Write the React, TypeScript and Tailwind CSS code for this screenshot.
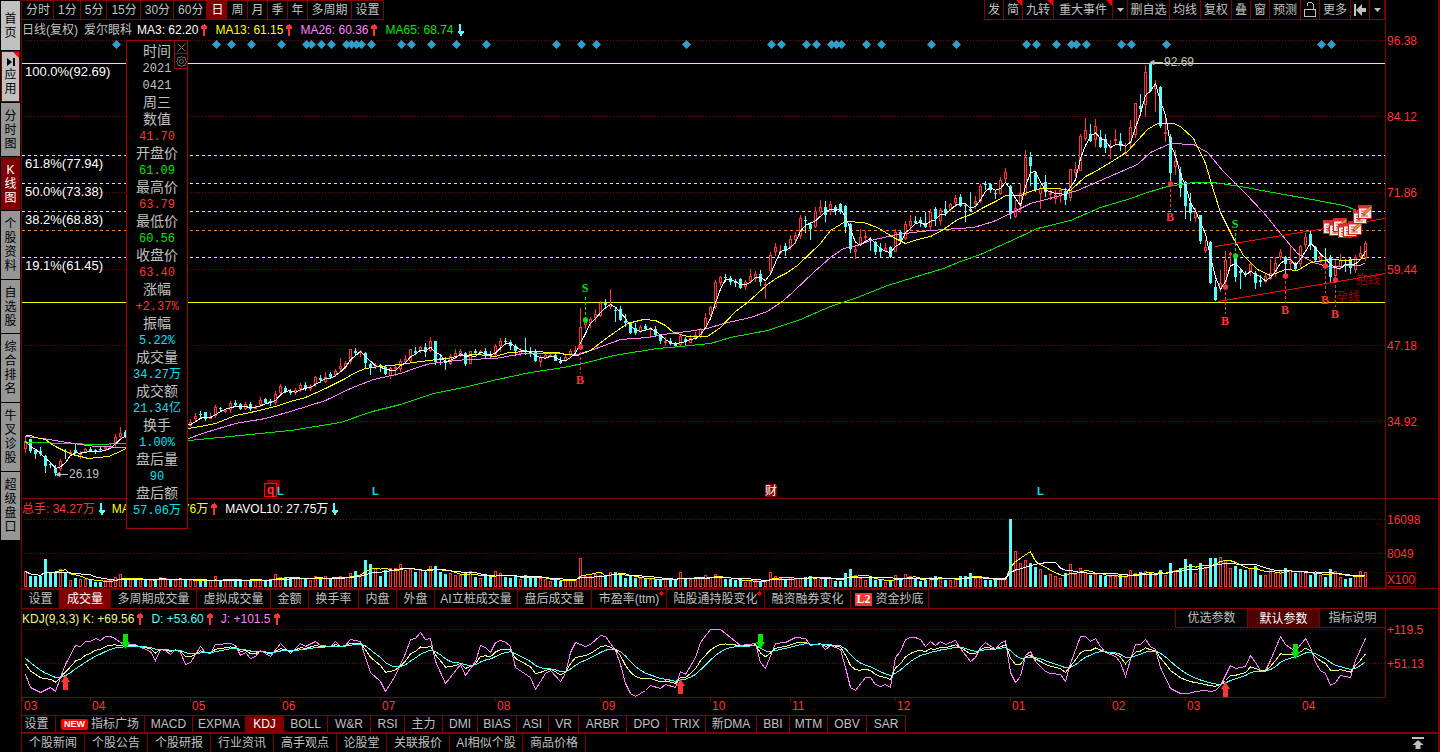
import React from "react";

/* ---------- data (chart units are pixels, one trading day every 5 units) ---------- */

// high, body top, body bottom, low, rising
const CANDLES: number[][] = [
  [437,441,449,453,1],[439,439,451,453,0],[450,450,454,459,0],[447,451,454,456,0],[455,456,466,473,0],
  [462,464,465,468,0],[465,468,473,476,0],[459,461,469,471,1],[449,451,452,459,0],[450,452,453,455,1],
  [444,450,453,454,0],[451,453,454,459,1],[448,449,452,453,1],[447,449,451,452,0],[449,450,452,454,0],
  [447,449,450,451,0],[447,447,449,450,1],[444,446,447,449,1],[434,437,443,447,1],[427,433,437,439,1],
  [430,432,436,438,0],[430,432,435,437,1],[428,431,434,436,0],[427,430,433,435,1],[428,430,433,434,0],
  [426,429,432,434,1],[427,429,431,433,0],[425,428,430,432,1],[424,427,430,431,1],[425,427,429,431,0],
  [423,425,428,430,1],[422,424,427,429,1],[421,423,426,428,0],
  [419,422,426,427,1],[413,416,419,421,1],[411,414,415,418,0],[412,412,419,421,0],[413,417,418,419,1],
  [405,407,416,418,1],[407,408,409,412,0],[409,410,411,413,1],[401,403,410,413,1],[400,403,405,406,0],
  [403,404,409,410,0],[402,404,409,410,1],[402,404,409,411,0],[405,407,408,409,1],[397,400,405,407,1],
  [398,399,403,404,0],[399,401,403,406,0],[391,394,403,405,1],[384,386,393,395,1],[386,388,392,393,0],
  [389,391,393,395,0],[388,390,393,395,1],[383,385,389,392,1],[382,385,389,391,0],[384,386,389,391,1],
  [376,377,384,387,1],[375,378,380,383,0],[372,377,382,383,1],[372,374,377,379,0],[369,371,375,377,1],
  [358,366,369,371,1],[361,363,367,369,1],[349,349,362,364,1],[348,351,353,355,0],[350,351,353,357,1],
  [352,353,363,369,0],[363,364,368,375,0],[363,365,367,369,1],[364,365,367,372,0],[365,367,374,375,0],
  [367,368,376,379,1],[365,367,369,376,1],[359,361,369,372,1],
  [355,359,362,364,1],[349,349,361,362,1],[347,351,353,354,0],[346,347,351,353,1],[343,347,352,357,0],
  [337,341,351,352,1],[341,341,362,365,0],[355,358,360,365,0],[357,361,363,370,0],[354,356,364,365,1],
  [349,353,357,359,1],[349,351,355,357,1],[352,353,364,366,0],[351,351,364,364,1],[349,351,353,355,0],
  [350,351,353,355,1],[348,351,356,358,0],[351,354,356,358,0],[344,346,355,356,1],[338,341,346,352,1],
  [338,341,342,345,0],[340,342,346,350,0],[344,346,351,356,0],[348,351,354,356,1],[338,350,351,355,0],
  [347,351,353,357,0],[349,351,361,362,0],[355,357,362,367,1],[354,355,358,359,1],[352,355,356,357,1],
  [354,355,361,361,0],[357,361,363,364,0],[354,357,361,362,1],[349,351,355,357,1],[346,350,351,355,1],
  [308,327,347,347,1],[318,322,325,329,1],[317,319,323,328,1],[309,314,318,322,1],[301,303,316,317,1],
  [299,303,305,309,0],[289,304,307,309,1],[307,310,311,322,0],[306,309,320,321,0],[314,321,323,327,0],
  [322,323,333,334,0],[323,328,333,335,0],[325,327,332,333,1],[324,326,329,330,0],[327,328,329,338,1],
  [326,329,335,337,0],[334,335,341,344,0],[337,341,342,346,1],[338,341,344,345,0],[342,343,346,347,0],
  [334,336,345,346,1],[337,339,342,345,0],[335,338,343,343,1],[332,335,338,340,1],[328,329,337,338,1],
  [313,318,329,329,1],[306,307,315,320,1],[280,282,307,309,1],[276,277,283,286,1],[274,277,278,282,0],
  [276,278,282,285,0],[279,281,283,287,0],[278,279,288,289,0],[280,282,287,290,1],[269,276,281,283,1],
  [271,274,279,282,1],[270,274,282,286,0],[282,284,285,299,1],[252,255,271,274,1],[243,247,252,256,1],
  [245,251,252,254,1],[243,246,251,256,0],[235,239,247,250,1],[232,235,240,244,1],[215,218,236,239,1],
  [216,220,221,233,0],[222,224,229,240,0],[207,211,227,228,1],[200,207,212,215,1],[201,207,215,222,0],
  [201,204,212,215,1],[205,207,210,215,0],[203,204,212,214,0],[205,206,227,233,0],[223,224,249,253,0],
  [245,249,252,259,1],[229,237,244,245,1],[231,236,237,241,1],[237,239,241,251,0],[241,242,252,255,0],
  [243,248,252,258,0],[243,248,251,252,1],[246,247,257,258,0],[229,232,252,252,1],[230,232,240,243,0],
  [221,224,239,240,1],[215,221,226,230,1],[216,221,223,224,0],[217,220,223,227,0],[212,223,227,228,0],
  [209,212,227,230,1],[207,209,219,226,0],[208,210,221,225,1],[201,209,213,216,0],[203,204,210,212,1],
  [195,198,203,207,1],[194,197,206,207,0],[203,205,206,222,0],[192,209,211,212,0],[196,201,204,209,1],
  [184,186,202,203,1],[181,184,185,190,0],[184,184,190,193,0],[190,193,194,199,0],[177,180,194,195,1],
  [168,172,179,182,1],[185,186,214,219,0],[200,208,217,218,1],[183,193,206,213,1],[150,157,195,196,1],
  [152,157,166,186,0],[171,173,190,192,0],[185,188,194,209,1],[175,182,192,197,0],[190,193,195,200,1],
  [190,195,199,204,1],[188,190,196,203,1],[188,191,200,205,0],[169,169,198,201,1],[162,169,173,177,1],
  [134,136,171,171,1],[118,130,139,141,1],[124,134,141,142,0],[119,126,140,147,1],[130,137,147,148,0],
  [134,139,148,153,0],[140,146,148,159,1],[129,139,141,144,1],[133,141,146,151,0],[143,152,153,155,1],
  [120,127,143,149,1],[103,103,135,138,1],[94,106,109,116,0],[65,72,105,117,1],[63,63,91,92,0],
  [80,86,89,112,1],[86,87,126,128,0],[118,132,134,142,1],[134,137,173,181,0],[150,161,167,175,1],
  [167,173,188,197,0],[181,182,206,219,0],[193,203,213,221,0],[208,212,218,222,1],[215,215,241,244,0],
  [240,247,251,253,1],[241,242,283,284,0],[280,287,300,301,0],[270,283,289,292,1],[251,260,282,287,1],
  [252,253,255,267,1],[255,258,277,282,0],[268,271,273,289,0],[271,273,275,277,0],[262,264,271,276,1],
  [271,273,283,289,0],[275,280,282,287,0],[274,276,282,283,1],[259,273,279,280,1],[257,263,274,277,1],
  [249,252,257,260,1],[256,257,264,275,0],[246,261,264,269,1],[262,263,269,270,0],[245,246,264,267,1],
  [233,237,245,249,1],[231,234,245,250,0],[246,247,260,262,0],[254,256,262,263,1],[248,257,258,266,0],
  [255,257,277,282,0],[259,267,276,279,1],[254,260,267,269,1],[259,264,265,272,0],[258,259,268,274,0],
  [255,257,270,273,1],[246,253,257,260,1],[241,243,258,261,1],
];

const VOLUMES = [
  16,11,11,11,28,14,14,18,15,7,9,8,8,7,5,5,7,7,10,13,8,8,7,9,7,7,7,10,9,8,7,9,7,7,7,6,6,7,11,7,7,7,8,8,7,7,7,7,7,8,
  13,10,10,9,9,9,9,7,11,9,11,9,9,11,10,14,16,12,27,23,19,11,17,19,19,23,17,18,15,17,15,21,21,15,13,14,12,12,14,16,
  10,9,11,11,16,14,10,9,11,8,12,10,9,9,8,6,8,6,7,7,8,29,11,11,13,12,11,15,15,12,9,11,9,9,8,8,8,8,8,8,7,15,8,8,10,9,12,10,13,
  9,8,8,7,7,5,6,7,6,7,15,11,9,7,10,8,9,10,11,9,10,9,9,6,6,14,18,12,9,7,10,7,7,5,7,12,9,13,11,8,6,7,10,11,9,7,7,9,11,
  11,14,9,9,7,7,7,9,9,68,36,24,27,24,20,18,12,13,11,9,14,23,13,19,15,12,13,12,11,11,11,12,10,17,14,15,16,14,12,17,12,24,
  17,19,28,23,14,24,19,29,29,30,27,19,21,18,17,19,21,12,12,18,14,16,19,17,14,16,15,12,14,12,10,18,16,10,8,9,11,16,15,
];

const MA13 =
  "25,435 30,435 35,437 45,439 50,443 57,447 65,451 72,454 80,456 88,458 98,457 108,456 115,453 122,450 127,447 188,428 200,426 215,423 235,415 250,412 275,406 290,401 305,397 325,388 345,378 355,372 365,368 372,367 380,366 400,364 413,362 428,360 447,358 460,355 477,354 495,356 508,352 527,351 557,352 565,354 577,355 590,350 607,337 627,323 643,319 655,320 665,325 673,332 687,336 707,336 720,327 735,311 747,302 767,284 777,277 787,272 797,265 820,243 830,230 845,221 863,222 877,227 893,237 905,243 917,239 930,236 943,229 957,219 973,213 983,207 997,200 1005,195 1020,195 1027,192 1040,188 1057,188 1070,190 1085,176 1093,172 1110,162 1127,151 1147,129 1157,123 1173,123 1180,126 1193,138 1205,163 1213,190 1220,212 1233,238 1243,255 1257,269 1270,275 1285,269 1297,270 1310,262 1330,259 1347,260 1365,258";
const MA26 =
  "25,436 42,438 60,441 80,444 95,446 127,447 188,438 205,432 235,423 265,418 290,411 325,400 350,388 373,379 400,373 417,367 430,363 447,361 467,359 495,358 523,353 547,353 577,354 593,349 620,339 647,337 663,334 687,331 707,328 723,323 750,317 767,311 783,300 793,291 813,272 830,257 843,248 857,245 870,240 897,234 920,231 943,229 973,227 993,221 1010,213 1030,203 1053,197 1077,190 1107,177 1137,164 1150,152 1170,143 1193,144 1207,152 1223,171 1245,193 1263,212 1280,233 1297,253 1313,262 1330,267 1347,265 1360,265 1365,262";
const MA65 =
  "25,442 75,443 90,444 127,443 188,440 250,434 290,430 340,422 372,411 400,404 415,399 433,393 463,387 497,379 530,372 563,367 587,362 613,355 657,348 680,346 710,343 730,337 767,330 800,319 830,306 857,297 887,285 913,277 943,268 960,261 980,254 1007,242 1037,228 1070,220 1100,207 1127,199 1147,192 1167,186 1193,182 1213,182 1240,186 1267,191 1317,200 1343,205 1357,210";

const J_KNOTS =
  "25,674 30,687 40,692 50,687 55,691 60,677 65,664 75,645 80,646 85,641 90,641 95,638 100,640 105,636 112,636 117,640 125,645 132,643 150,651 155,660 160,649 165,650 170,654 175,649 180,652 185,664 190,662 200,646 205,652 210,653 215,644 230,643 235,645 240,655 245,652 250,658 255,656 260,650 270,656 280,643 290,653 300,643 305,646 315,641 320,645 330,646 335,641 340,646 345,645 350,639 360,641 365,657 370,672 380,681 385,691 395,675 405,653 410,639 415,638 420,632 425,639 430,638 435,661 445,683 460,664 465,675 475,661 480,645 485,647 490,652 495,642 502,639 510,646 515,667 530,677 535,689 545,673 550,670 560,681 565,673 570,652 575,642 585,646 590,644 600,635 605,636 615,650 620,664 625,683 630,693 635,696 645,690 650,685 660,688 665,684 675,687 680,671 685,674 695,657 700,642 710,629 720,629 740,645 755,643 760,662 765,668 775,643 785,642 795,637 805,638 810,645 820,643 825,649 830,645 840,649 845,667 850,687 855,690 865,677 870,677 875,684 880,686 885,684 890,687 895,657 900,651 905,639 912,636 920,639 925,646 930,641 935,645 940,641 945,644 955,640 960,648 970,661 975,657 980,647 985,642 995,649 1000,643 1005,640 1010,672 1015,682 1020,676 1025,655 1030,651 1035,661 1045,671 1050,673 1060,674 1065,681 1070,663 1080,636 1085,636 1090,641 1095,638 1100,646 1105,652 1115,656 1120,662 1125,676 1130,659 1135,644 1140,644 1145,639 1150,646 1155,649 1160,667 1170,688 1180,693 1188,693 1195,691 1205,690 1210,691 1215,690 1220,685 1230,665 1235,668 1245,666 1250,655 1255,662 1260,670 1265,670 1270,660 1280,636 1285,644 1295,651 1305,638 1310,647 1315,662 1320,670 1325,673 1330,685 1335,682 1340,675 1350,677 1355,660 1365,638";

const dayX = (i: number) => 25 + 5 * i;
const toPoints = (ys: number[]) => ys.map((y, i) => `${dayX(i)},${y.toFixed(1)}`).join(" ");
const movingAverage = (v: number[], n: number) =>
  v.map((_, i) => {
    const part = v.slice(Math.max(0, i - n + 1), i + 1);
    return part.reduce((a, b) => a + b, 0) / part.length;
  });

const closes = CANDLES.map((c) => (c[4] ? c[1] : c[2]));
const ma3Points = toPoints(movingAverage(closes, 3));
const volume5Points = toPoints(movingAverage(VOLUMES, 5).map((v) => 587 - v));
const volume10Points = toPoints(movingAverage(VOLUMES, 10).map((v) => 587 - v));

// J is 3K - 2D and D smooths K over three days, so K and D both follow from J.
const knots = J_KNOTS.split(" ").map((p) => p.split(",").map(Number));
const jValues = CANDLES.map((_, i) => {
  const x = dayX(i);
  const n = Math.max(1, knots.findIndex((k) => k[0] >= x));
  const [x0, y0] = knots[n - 1];
  const [x1, y1] = knots[n];
  return y0 + ((y1 - y0) * (x - x0)) / (x1 - x0);
});
const dValues: number[] = [];
jValues.forEach((j, i) => dValues.push(i ? (6 * dValues[i - 1] + j) / 7 : 658));
const kValues = jValues.map((j, i) => (j + 2 * dValues[i]) / 3);

const DIAMONDS = [
  116,216,231,251,281,306,311,321,331,346,351,356,361,371,401,411,431,456,486,556,581,596,686,771,781,806,816,831,836,
  841,866,881,931,956,1026,1036,1056,1071,1076,1086,1121,1131,1166,1321,1331,
];

const SIGNALS = [
  { kind: "B", x: 580, dot: 347, label: 380 },
  { kind: "S", x: 585, dot: 320, label: 288 },
  { kind: "B", x: 1170, dot: 184, label: 217 },
  { kind: "B", x: 1225, dot: 287, label: 321 },
  { kind: "S", x: 1235, dot: 256, label: 224 },
  { kind: "B", x: 1285, dot: 276, label: 310 },
  { kind: "B", x: 1325, dot: 266, label: 300 },
  { kind: "B", x: 1335, dot: 280, label: 314 },
];

const FIBONACCI = [
  { y: 63, label: "100.0%(92.69)", at: 76 },
  { y: 155, label: "61.8%(77.94)", at: 168 },
  { y: 183, label: "50.0%(73.38)", at: 196 },
  { y: 211, label: "38.2%(68.83)", at: 224 },
  { y: 257, label: "19.1%(61.45)", at: 270 },
];

const NOTES: [number, number][] = [
  [1323,220],[1329,222],[1333,218],[1338,224],[1343,223],[1348,221],[1353,210],[1358,205],
];

const MONTHS: [number, string][] = [
  [22,"03"],[90,"04"],[190,"05"],[280,"06"],[380,"07"],[495,"08"],[600,"09"],[710,"10"],[790,"11"],[895,"12"],
  [1010,"01"],[1110,"02"],[1185,"03"],[1300,"04"],
];

const DETAILS: [string, string][] = [
  ["时间","text-[#c0c0c0]"],["2021","text-[#c0c0c0]"],["0421","text-[#c0c0c0]"],["周三","text-[#c0c0c0]"],
  ["数值","text-[#c0c0c0]"],["41.70","text-[#ff3434]"],["开盘价","text-[#c0c0c0]"],["61.09","text-[#00e600]"],
  ["最高价","text-[#c0c0c0]"],["63.79","text-[#ff3434]"],["最低价","text-[#c0c0c0]"],["60.56","text-[#00e600]"],
  ["收盘价","text-[#c0c0c0]"],["63.40","text-[#ff3434]"],["涨幅","text-[#c0c0c0]"],["+2.37%","text-[#ff3434]"],
  ["振幅","text-[#c0c0c0]"],["5.22%","text-[#02e2f4]"],["成交量","text-[#c0c0c0]"],["34.27万","text-[#02e2f4]"],
  ["成交额","text-[#c0c0c0]"],["21.34亿","text-[#02e2f4]"],["换手","text-[#c0c0c0]"],["1.00%","text-[#02e2f4]"],
  ["盘后量","text-[#c0c0c0]"],["90","text-[#02e2f4]"],["盘后额","text-[#c0c0c0]"],["57.06万","text-[#02e2f4]"],
];

const SIDE: { label: string; box: string }[] = [
  { label: "首页", box: "h-[49px] bg-[#c0c0c0] text-black" },
  { label: "应用", box: "h-[51px] bg-[#c0c0c0] text-black border border-[#800000] pt-[10px]" },
  { label: "分时图", box: "h-[53px] bg-[#969696] text-black" },
  { label: "K线图", box: "h-[53px] bg-[#800000] text-white" },
  { label: "个股资料", box: "h-[68px] bg-[#969696] text-black" },
  { label: "自选股", box: "h-[53px] bg-[#969696] text-black" },
  { label: "综合排名", box: "h-[68px] bg-[#969696] text-black" },
  { label: "牛叉诊股", box: "h-[68px] bg-[#969696] text-black" },
  { label: "超级盘口", box: "h-[68px] bg-[#969696] text-black" },
];

const PERIODS = ["分时","1分","5分","15分","30分","60分","日","周","月","季","年","多周期","设置"];

const TOOLS: { label: string; box: string; flag?: boolean }[] = [
  { label: "发", box: "w-[19px]" },
  { label: "简", box: "w-[19px]", flag: true },
  { label: "九转", box: "w-[31px]", flag: true },
  { label: "重大事件", box: "w-[59px]", flag: true },
  { label: "▼", box: "w-[15px]" },
  { label: "删自选", box: "w-[42px]" },
  { label: "均线", box: "w-[31px]" },
  { label: "复权", box: "w-[31px]" },
  { label: "叠", box: "w-[19px]" },
  { label: "窗", box: "w-[19px]" },
  { label: "预测", box: "w-[31px]" },
  { label: "lock", box: "w-[19px]" },
  { label: "更多", box: "w-[31px]" },
  { label: "back", box: "w-[19px]" },
  { label: "▼", box: "w-[15px]" },
];

const VOLUME_TABS: [string, string][] = [
  ["设置","w-[38px]"],["成交量","w-[51px]"],["多周期成交量","w-[86px]"],["虚拟成交量","w-[74px]"],["金额","w-[38px]"],
  ["换手率","w-[50px]"],["内盘","w-[38px]"],["外盘","w-[38px]"],["AI立桩成交量","w-[83px]"],["盘后成交量","w-[74px]"],
  ["市盈率(ttm)","w-[75px]"],["陆股通持股变化","w-[98px]"],["融资融券变化","w-[86px]"],["资金抄底","w-[78px]"],
];

const INDICATORS: [string, string][] = [
  ["设置","w-[34px]"],["指标广场","w-[89px]"],["MACD","w-[48px]"],["EXPMA","w-[53px]"],["KDJ","w-[38px]"],
  ["BOLL","w-[44px]"],["W&R","w-[43px]"],["RSI","w-[34px]"],["主力","w-[38px]"],["DMI","w-[35px]"],["BIAS","w-[39px]"],
  ["ASI","w-[32px]"],["VR","w-[30px]"],["ARBR","w-[48px]"],["DPO","w-[40px]"],["TRIX","w-[39px]"],["新DMA","w-[51px]"],
  ["BBI","w-[33px]"],["MTM","w-[38px]"],["OBV","w-[39px]"],["SAR","w-[39px]"],
];

const NEWS: [string, string][] = [
  ["个股新闻","w-[63px]"],["个股公告","w-[63px]"],["个股研报","w-[63px]"],["行业资讯","w-[63px]"],["高手观点","w-[63px]"],
  ["论股堂","w-[50px]"],["关联报价","w-[63px]"],["AI相似个股","w-[73px]"],["商品价格","w-[63px]"],
];

/* ---------- small pieces ---------- */

function Arrow({ up }: { up?: boolean }) {
  return (
    <svg width="7" height="12" className="mx-[3px] shrink-0" shapeRendering="crispEdges">
      {up ? (
        <path d="M3 0h1v1h1v1h1v3h-2v7h-2v-7h-2v-3h1v-1h2z" fill="#ff3434" />
      ) : (
        <path d="M2 0h2v7h3v2h-1v1h-1v2h-2v-2h-1v-1h-1v-2h1z" fill="#54fcfc" />
      )}
    </svg>
  );
}

function Flag() {
  return (
    <svg width="6" height="6" className="absolute right-0 top-0">
      <path d="M0 0H6V6Z" fill="#ff0000" />
    </svg>
  );
}

function GridLine({ y }: { y: number }) {
  return <line x1="3" x2="100%" y1={y + 0.5} y2={y + 0.5} stroke="#8c0000" strokeDasharray="1 2" />;
}

function ToolFace({ label }: { label: string }) {
  if (label === "▼")
    return (
      <svg width="7" height="4">
        <path d="M0 0H7L3.5 4Z" fill="#c0c0c0" />
      </svg>
    );
  if (label === "lock")
    return (
      <svg width="12" height="15" fill="none" stroke="#c0c0c0" shapeRendering="crispEdges">
        <path d="M0.5 7.5H11.5V14.5H0.5Z" />
        <path d="M3 4V2.5L4.500 .5H7.500L9.500 2.500V7" />
      </svg>
    );
  if (label === "back")
    return (
      <svg width="12" height="12" fill="#c0c0c0">
        <path d="M0 0H2V12H0ZM2 6L8 0V4H12V8H8V12Z" />
      </svg>
    );
  return <>{label}</>;
}

function PriceChart() {
  return (
    <svg className="block h-[458px] w-full overflow-hidden">
      <g shapeRendering="crispEdges">
        {[0, 76, 152, 229, 305, 381].map((y) => (
          <GridLine key={y} y={y} />
        ))}
        {FIBONACCI.map((f, i) => (
          <line key={f.y} x1="0" x2="100%" y1={f.y - 39.5} y2={f.y - 39.5} stroke="#ffff00" strokeDasharray={i ? "3 3" : undefined} />
        ))}
        <line x1="0" x2="100%" y1="190.5" y2="190.5" stroke="#ff8020" strokeDasharray="3 3" />
        <line x1="0" x2="100%" y1="262.5" y2="262.5" stroke="#ffff00" />
      </g>
      <g transform="translate(-22 -40)">
        {DIAMONDS.map((x) => (
          <path key={x} d={`M${x + 0.5} 40L${x + 5} 44.5L${x + 0.5} 49L${x - 4} 44.5Z`} fill="#2ea0cc" />
        ))}
        <g shapeRendering="crispEdges">
          {CANDLES.map(([hi, top, bot, lo, rising], i) => {
            const x = dayX(i);
            return (
              <g key={i}>
                <rect x={x} y={hi} width="1" height={lo - hi} fill={rising ? "#ff3434" : "#54fcfc"} />
                {rising ? (
                  <rect x={x - 0.5} y={top + 0.5} width="2" height={Math.max(1, bot - top - 1)} fill="#000" stroke="#ff3434" />
                ) : (
                  <rect x={x - 1} y={top} width="3" height={Math.max(1, bot - top)} fill="#54fcfc" />
                )}
              </g>
            );
          })}
          <g fill="none" transform="translate(0.5 0.5)">
            <polyline points={MA65} stroke="#00e600" />
            <polyline points={MA26} stroke="#ff80ff" />
            <polyline points={MA13} stroke="#ffff00" />
            <polyline points={ma3Points} stroke="#ffffff" />
            <path d="M1215 246L1385 218M1218 301L1385 273" stroke="#ff0000" />
          </g>
        </g>
        {SIGNALS.map((s) => {
          const color = s.kind === "B" ? "#ff3434" : "#00e600";
          const end = s.kind === "B" ? s.label - 7 : s.label + 9;
          return (
            <g key={s.x}>
              <line x1={s.x + 0.5} x2={s.x + 0.5} y1={s.dot} y2={end} stroke={color} strokeDasharray="3 2" shapeRendering="crispEdges" />
              <circle cx={s.x + 0.5} cy={s.dot} r="2.7" fill={color} />
              <text x={s.x} y={s.label + 4} textAnchor="middle" fill={color} className="font-['Liberation_Serif',serif] text-[12px] font-bold">
                {s.kind}
              </text>
            </g>
          );
        })}
        {NOTES.map(([x, y]) => (
          <g key={x}>
            <rect x={x + 0.5} y={y + 0.5} width="13" height="13" fill="#ffe8e4" stroke="#c81e1e" />
            <path d={`M${x} ${y + 2}H${x + 14}`} stroke="#d83030" strokeWidth="3" />
            <path d={`M${x + 3} ${y + 6}H${x + 8}M${x + 3} ${y + 8.500}H${x + 7}M${x + 3} ${y + 11}H${x + 10}`} stroke="#d04040" />
            <path d={`M${x + 5} ${y + 10}L${x + 13} ${y + 2}`} stroke="#a84c14" strokeWidth="3" />
            <path d={`M${x + 6} ${y + 9}L${x + 13} ${y + 2}`} stroke="#ff9a3c" strokeWidth="1.500" />
          </g>
        ))}
        <g className="font-['Liberation_Sans','Noto_Sans_CJK_SC',sans-serif] text-[12px]">
          <g fill="#ffffff" className="text-[13px]">
            {FIBONACCI.map((f) => (
              <text key={f.y} x="25" y={f.at}>
                {f.label}
              </text>
            ))}
          </g>
          <text x="1164" y="66" fill="#c0c0c0">92.69</text>
          <path d="M1150 62.500H1163M1150 62.500L1154 60.500V64.500Z" stroke="#c0c0c0" fill="#c0c0c0" />
          <text x="69" y="478" fill="#c0c0c0">26.19</text>
          <path d="M56 474.500H68M56 474.500L60 472.500V476.500Z" stroke="#c0c0c0" fill="#c0c0c0" />
          <text x="1356" y="284" fill="#a80000">抱线</text>
          <text x="1336" y="301" fill="#a80000">孕线</text>
          <rect x="267" y="480" width="13" height="12" fill="#800000" />
          <rect x="264.500" y="483.500" width="12" height="13" fill="#300000" stroke="#ff0000" />
          <text x="267" y="494" fill="#ff3434" className="font-bold">q</text>
          <g fill="#02e2f4" className="text-[11px] font-bold">
            <text x="277" y="495">L</text>
            <text x="372" y="495">L</text>
            <text x="1037" y="495">L</text>
          </g>
          <rect x="765" y="484" width="12" height="13" fill="#800000" />
          <text x="765" y="495" fill="#ffffff">财</text>
        </g>
      </g>
    </svg>
  );
}

function VolumeChart() {
  return (
    <svg className="block h-[69px] w-full overflow-hidden" shapeRendering="crispEdges">
      <GridLine y={0} />
      <GridLine y={34} />
      <GridLine y={68} />
      <g transform="translate(-22 -519)">
        {VOLUMES.map((v, i) => {
          const x = dayX(i);
          return CANDLES[i][4] ? (
            <rect key={i} x={x - 0.5} y={587.5 - v} width="2" height={v - 1} fill="#000" stroke="#ff3434" />
          ) : (
            <rect key={i} x={x - 1} y={587 - v} width="3" height={v} fill="#54fcfc" />
          );
        })}
        <polyline points={volume5Points} fill="none" stroke="#ffff00" transform="translate(0.5 0.5)" />
        <polyline points={volume10Points} fill="none" stroke="#ffffff" transform="translate(0.5 0.5)" />
      </g>
    </svg>
  );
}

function KdjChart() {
  const down = (x: number, y: number) => `M${x - 2} ${y}h5v8h2l-4.500 7l-4.500 -7h2z`;
  const up = (x: number, y: number) => `M${x + 0.5} ${y}l4.500 7h-2v8h-5v-8h-2z`;
  return (
    <svg className="block h-[69px] w-full overflow-hidden">
      <g shapeRendering="crispEdges">
        <GridLine y={1} />
        <GridLine y={35} />
        <g transform="translate(-21.5 -627.5)" fill="none">
          <polyline points={toPoints(jValues)} stroke="#ff80ff" />
          <polyline points={toPoints(kValues)} stroke="#f0f888" />
          <polyline points={toPoints(dValues)} stroke="#54fcfc" />
        </g>
      </g>
      <g transform="translate(-22 -628)">
        <path d={down(125, 634) + down(760, 634) + down(1295, 644)} fill="#00e600" />
        <path d={up(65, 675) + up(680, 679) + up(1225, 682)} fill="#ff3434" />
      </g>
    </svg>
  );
}

const tabBase = "relative flex shrink-0 items-center justify-center whitespace-nowrap border-r border-[#800000] ";

export default function App() {
  return (
    <div className="flex w-full overflow-hidden bg-black font-['Liberation_Sans','Noto_Sans_CJK_SC',sans-serif] text-[12px] leading-[14px] text-[#c0c0c0]">
      <nav className="flex w-[21px] shrink-0 flex-col gap-px pl-px pr-px pt-px">
        {SIDE.map((s) => (
          <button key={s.label} className={"relative flex w-full flex-col items-center justify-center " + s.box}>
            {s.label === "应用" && (
              <>
                <Flag />
                <svg width="8" height="8" className="absolute left-[5px] top-[6px]">
                  <path d="M0 0L5 4L0 8ZM6 0H8V8H6Z" fill="#000" />
                </svg>
              </>
            )}
            <span className="block w-3 break-all text-center">{s.label}</span>
          </button>
        ))}
      </nav>

      <main className="relative min-w-0 flex-1 border-l border-r-2 border-l-[#800000] border-r-[#800000]">
        {/* toolbar */}
        <div className="flex h-5">
          <div className="flex min-w-0 flex-1 justify-between border-r border-[#800000]">
            <div className="flex border-y border-[#800000]">
              {PERIODS.map((p) => (
                <button key={p} className={tabBase + "pl-1 pr-[3px] " + (p === "日" ? "bg-[#800000] text-white" : "")}>
                  {p}
                </button>
              ))}
            </div>
            <div className="flex border-b border-l border-[#800000]">
              {TOOLS.map((t, i) => (
                <button key={i} aria-label={t.label} className={tabBase + t.box}>
                  <ToolFace label={t.label} />
                  {t.flag && <Flag />}
                </button>
              ))}
            </div>
          </div>
          <div className="w-[52px]" />
        </div>

        {/* price panel */}
        <section className="flex border-b border-[#800000]">
          <div className="min-w-0 flex-1 border-r border-[#800000]">
            <div className="flex h-5 items-center whitespace-nowrap">
              <span className="mr-[6px]">日线(复权)</span>
              <span className="mr-[5px]">爱尔眼科</span>
              <span className="text-white">MA3: 62.20</span>
              <Arrow up />
              <span className="ml-1 text-[#ffff00]">MA13: 61.15</span>
              <Arrow up />
              <span className="ml-1 text-[#ff80ff]">MA26: 60.36</span>
              <Arrow up />
              <span className="ml-1 text-[#00e600]">MA65: 68.74</span>
              <Arrow />
            </div>
            <PriceChart />
          </div>
          <svg className="h-[478px] w-[52px] shrink-0" fill="#ff3434">
            {[["96.38", 25], ["84.12", 101], ["71.86", 177], ["59.44", 254], ["47.18", 330], ["34.92", 406]].map(([t, y]) => (
              <text key={t} x="1" y={y}>
                {t}
              </text>
            ))}
          </svg>
        </section>

        {/* volume panel */}
        <section className="flex border-b border-[#800000]">
          <div className="min-w-0 flex-1 border-r border-[#800000]">
            <div className="flex h-5 items-center whitespace-nowrap">
              <span className="text-[#ff3434]">总手: 34.27万</span>
              <Arrow />
              <span className="ml-1 text-[#ffff00]">MAVOL5: 24.76万</span>
              <Arrow up />
              <span className="ml-1 text-white">MAVOL10: 27.75万</span>
              <Arrow />
            </div>
            <VolumeChart />
          </div>
          <svg className="h-[89px] w-[52px] shrink-0" fill="#ff3434">
            <text x="1" y="25">16098</text>
            <text x="1" y="59">8049</text>
            <rect x="0.5" y="73.500" width="29" height="14" fill="none" stroke="#800000" />
            <text x="1" y="85">X100</text>
          </svg>
        </section>

        <div className="flex h-5 border-b border-[#800000]">
          {VOLUME_TABS.map(([label, width]) => (
            <button key={label} className={tabBase + "border-t " + width + (label === "成交量" ? " bg-[#800000] text-white" : "")}>
              {label === "资金抄底" && (
                <span className="mr-1 bg-[#ff3434] px-px font-['Liberation_Serif',serif] font-bold leading-[13px] text-white">L2</span>
              )}
              {label}
              {(label === "市盈率(ttm)" || label === "陆股通持股变化") && (
                <svg width="5" height="5" className="absolute right-[2px] top-px">
                  <path d="M2.500 0L5 2.500L2.500 5L0 2.500Z" fill="#ff0000" />
                </svg>
              )}
            </button>
          ))}
        </div>

        {/* KDJ panel */}
        <section className="flex">
          <div className="min-w-0 flex-1 border-b border-r border-[#800000]">
            <div className="flex h-[19px] items-center whitespace-nowrap">
              <span className="text-[#f0f888]">KDJ(9,3,3) K: +69.56</span>
              <Arrow up />
              <span className="ml-1 text-[#54fcfc]">D: +53.60</span>
              <Arrow up />
              <span className="ml-1 text-[#ff80ff]">J: +101.5</span>
              <Arrow up />
              <div className="ml-auto flex h-full border-b border-l border-[#800000]">
                <button className={tabBase + "w-[72px]"}>优选参数</button>
                <button className={tabBase + "w-[72px] border-t bg-[#500000] text-white"}>默认参数</button>
                <button className="w-[65px]">指标说明</button>
              </div>
            </div>
            <KdjChart />
          </div>
          <svg className="h-[88px] w-[52px] shrink-0" fill="#ff3434">
            <text x="1" y="25">+119.5</text>
            <text x="1" y="59">+51.13</text>
          </svg>
        </section>
        <svg className="block h-[17px] w-full" fill="#ff3434">
          {MONTHS.map(([x, m]) => (
            <g key={x}>
              <rect x={x - 22} y="0" width="1" height="3" fill="#800000" />
              <text x={x - 20} y="12">
                {m}
              </text>
            </g>
          ))}
        </svg>

        <div className="flex h-[17px]">
          {INDICATORS.map(([label, width]) => (
            <button key={label} className={tabBase + "border-t " + width + (label === "KDJ" ? " bg-[#800000] text-white" : "") + (label === "设置" ? " pr-1" : "")}>
              {label === "指标广场" && (
                <span className="mr-[3px] rounded-xs bg-[#ff0000] px-[3px] text-[9px] font-bold leading-[11px] text-white">NEW</span>
              )}
              {label}
            </button>
          ))}
        </div>
        <div className="flex h-5 items-stretch border-t-2 border-[#800000]">
          {NEWS.map(([label, width]) => (
            <button key={label} className={tabBase + width}>
              {label}
            </button>
          ))}
          <button aria-label="展开" className="ml-auto mr-[14px]">
            <svg width="12" height="12" fill="#c0c0c0">
              <path d="M0 0H12V2H0ZM6 3L11.500 8H8.500V12H3.500V8H0.500Z" />
            </svg>
          </button>
        </div>

        {/* daily details */}
        <aside className="absolute left-[104px] top-10 h-[489px] w-[62px] border border-[#aa0000] bg-black pt-[3px] text-center">
          {DETAILS.map(([text, color], i) => (
            <div
              key={i}
              className={
                "h-[17px] whitespace-nowrap font-['Liberation_Mono','Noto_Sans_CJK_SC',monospace] leading-[17px] " +
                (/^[+\d]/.test(text) ? "text-[12px] " : "text-[14px] ") +
                color
              }
            >
              {text}
            </div>
          ))}
          <div className="absolute -right-px -top-px flex w-[14px] flex-col border border-[#aa0000] bg-black">
            <button aria-label="关闭" className="flex h-[13px] items-center justify-center border-b border-[#aa0000]">
              <svg width="9" height="9" stroke="#707070">
                <path d="M0.500 0.500L8.500 8.500M8.500 0.500L0.500 8.500" />
              </svg>
            </button>
            <button aria-label="设定" className="flex h-[14px] items-center justify-center">
              <svg width="11" height="11" fill="none" stroke="#707070">
                <path d="M5.500 0.500L7 1.500L9 1.500L9.500 4L10.500 5.500L9.500 7L9 9.500L7 9.500L5.500 10.500L4 9.500L2 9.500L1.500 7L0.500 5.500L1.500 4L2 1.500L4 1.500Z" />
                <circle cx="5.500" cy="5.500" r="2" />
              </svg>
            </button>
          </div>
        </aside>
      </main>
    </div>
  );
}
